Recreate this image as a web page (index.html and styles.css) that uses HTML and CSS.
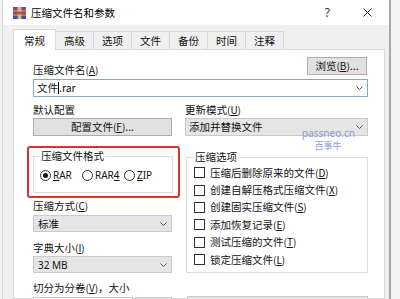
FILE: index.html
```html
<!DOCTYPE html>
<html lang="zh-CN">
<head>
<meta charset="utf-8">
<title>压缩文件名和参数</title>
<link rel="stylesheet" href="styles.css">
</head>
<body>
<div class="window">
  <div class="titlebar">
    <svg class="app-icon" viewBox="0 0 14 13" width="13" height="12">
      <rect x="0" y="0" width="14" height="4" fill="#9a3d78"/>
      <rect x="0" y="4.5" width="14" height="4" fill="#b8453a"/>
      <rect x="0" y="9" width="14" height="4" fill="#3e4fa3"/>
      <rect x="5" y="0" width="4" height="13" fill="#d9bb82"/>
      <rect x="4.5" y="5" width="5" height="3" fill="#8a6a3a"/>
    </svg>
    <span class="title">压缩文件名和参数</span>
    <span class="help">?</span>
    <svg class="close" viewBox="0 0 9 9" width="9" height="9">
      <path d="M0.5 0.5 L8.5 8.5 M8.5 0.5 L0.5 8.5" stroke="#222" stroke-width="1" fill="none"/>
    </svg>
  </div>
  <div class="tabs">
    <div class="tab active">常规</div>
    <div class="tab">高级</div>
    <div class="tab">选项</div>
    <div class="tab">文件</div>
    <div class="tab">备份</div>
    <div class="tab">时间</div>
    <div class="tab">注释</div>
  </div>
  <div class="panel">
    <div class="name-row">
      <span class="label">压缩文件名<span class="key">(<u>A</u>)</span></span>
      <div class="btn browse">浏览<span class="key">(<u>B</u>)</span>...</div>
    </div>
    <div class="combo edit">
      <span>文件<span class="caret"></span>.rar</span>
      <svg class="chev" viewBox="0 0 7 4" width="7" height="4"><polyline points="0.5,0.5 3.5,3.5 6.5,0.5" fill="none" stroke="#555" stroke-width="1"/></svg>
    </div>
    <div class="cols">
      <div class="col-left">
        <span class="label">默认配置</span>
        <div class="btn profile-btn">配置文件<span class="key">(<u>F</u>)</span>...</div>
        <div class="redbox">
          <fieldset class="group format-group">
            <legend>压缩文件格式</legend>
            <div class="radios">
              <div class="radio"><span class="radio-dot on"></span><span class="text"><u>R</u>AR</span></div>
              <div class="radio"><span class="radio-dot"></span><span class="text">RAR<u>4</u></span></div>
              <div class="radio"><span class="radio-dot"></span><span class="text"><u>Z</u>IP</span></div>
            </div>
          </fieldset>
        </div>
        <span class="label method-label">压缩方式<span class="key">(<u>C</u>)</span></span>
        <div class="combo method-combo">
          <span>标准</span>
          <svg class="chev" viewBox="0 0 7 4" width="7" height="4"><polyline points="0.5,0.5 3.5,3.5 6.5,0.5" fill="none" stroke="#555" stroke-width="1"/></svg>
        </div>
        <span class="label dict-label">字典大小<span class="key">(<u>I</u>)</span></span>
        <div class="combo dict-combo">
          <span class="latin">32 MB</span>
          <svg class="chev" viewBox="0 0 7 4" width="7" height="4"><polyline points="0.5,0.5 3.5,3.5 6.5,0.5" fill="none" stroke="#555" stroke-width="1"/></svg>
        </div>
        <span class="label split-label">切分为分卷<span class="key">(<u>V</u>)</span>，大小</span>
        <div class="split-row">
          <div class="split-size"></div>
          <div class="combo split-unit"></div>
        </div>
      </div>
      <div class="col-right">
        <span class="label">更新模式<span class="key">(<u>U</u>)</span></span>
        <div class="combo update-combo">
          <span>添加并替换文件</span>
          <svg class="chev" viewBox="0 0 7 4" width="7" height="4"><polyline points="0.5,0.5 3.5,3.5 6.5,0.5" fill="none" stroke="#555" stroke-width="1"/></svg>
        </div>
        <fieldset class="group options">
          <legend>压缩选项</legend>
          <div class="check-row"><span class="check"></span><span class="text">压缩后删除原来的文件<span class="key">(<u>D</u>)</span></span></div>
          <div class="check-row"><span class="check"></span><span class="text">创建自解压格式压缩文件<span class="key">(<u>X</u>)</span></span></div>
          <div class="check-row"><span class="check"></span><span class="text">创建固实压缩文件<span class="key">(<u>S</u>)</span></span></div>
          <div class="check-row"><span class="check"></span><span class="text">添加恢复记录<span class="key">(<u>E</u>)</span></span></div>
          <div class="check-row"><span class="check"></span><span class="text">测试压缩的文件<span class="key">(<u>T</u>)</span></span></div>
          <div class="check-row"><span class="check"></span><span class="text">锁定压缩文件<span class="key">(<u>L</u>)</span></span></div>
        </fieldset>
        <div class="combo bottom-combo"></div>
      </div>
    </div>
    <div class="watermark">
      <div class="wm-domain">passneo.cn</div>
      <div class="wm-name">百事牛</div>
    </div>
  </div>
</div>
</body>
</html>
```

FILE: styles.css
```css
* { box-sizing: border-box; }
html, body { margin: 0; padding: 0; }
body {
  width: 400px;
  height: 299px;
  overflow: hidden;
  background: #f4f4f4;
  font-family: "Noto Sans CJK SC", "Noto Sans", sans-serif;
  font-size: 10.5px;
  color: #111;
}
.window {
  margin-left: 2px;
  width: 389px;
  height: 299px;
  overflow: hidden;
  border-left: 1px solid #d4d4d4;
  border-right: 2px solid #a8a8a8;
  background: #f0f0f0;
  display: flex;
  flex-direction: column;
}
.titlebar {
  height: 25px;
  flex: none;
  background: #fff;
  display: flex;
  align-items: center;
}
.app-icon { margin-left: 10px; flex: none; }
.title { margin-left: 5px; line-height: 14px; color: #000; }
.help {
  margin-left: auto;
  font-family: "Noto Sans", sans-serif;
  font-size: 12px;
  line-height: 14px;
  color: #333;
}
.close { margin-left: 33px; margin-right: 17px; flex: none; }

.tabs {
  display: flex;
  align-items: flex-end;
  margin-left: 10px;
  padding-top: 4px;
  flex: none;
}
.tab {
  width: 38px;
  height: 18px;
  border: 1px solid #d9d9d9;
  border-left: none;
  border-bottom: none;
  padding-top: 2px;
  line-height: 14px;
  text-align: center;
  background: #f0f0f0;
}
.tab.active {
  width: 43px;
  height: 21px;
  margin-bottom: -1px;
  border-left: 1px solid #d9d9d9;
  padding-top: 4px;
  background: #fff;
  position: relative;
  z-index: 1;
}

.panel {
  margin-left: 10px;
  width: 372px;
  flex: 1;
  min-height: 0;
  background: #fff;
  border: 1px solid #d9d9d9;
  padding: 7px 16px 0 19px;
  position: relative;
}
.label { line-height: 14px; white-space: nowrap; }
.key { font-size: 10px; }
.latin { font-family: "Noto Sans", sans-serif; font-size: 10px; }

.name-row {
  display: flex;
  justify-content: space-between;
  height: 20px;
}
.name-row .label { align-self: flex-end; }

.btn {
  display: flex;
  align-items: center;
  justify-content: center;
  height: 18px;
  background: #e1e1e1;
  border: 1px solid #adadad;
  line-height: 14px;
  white-space: nowrap;
}
.browse { width: 60px; margin-right: 1px; }

.combo {
  height: 17px;
  display: flex;
  align-items: center;
  justify-content: space-between;
  padding: 0 4px 0 4px;
  background: #e5e5e5;
  border: 1px solid #cacaca;
  line-height: 14px;
  white-space: nowrap;
}
.chev { flex: none; }
.edit {
  height: 18px;
  margin-top: 2px;
  padding-left: 3px;
  background: #fff;
  border-color: #86aab9;
}
.caret {
  display: inline-block;
  width: 1px;
  height: 12px;
  background: #000;
  vertical-align: -2px;
}

.cols { display: flex; gap: 13px; margin-top: 6px; }
.col-left { width: 139px; display: flex; flex-direction: column; }
.col-right { width: 183px; display: flex; flex-direction: column; }

.profile-btn { margin-top: 1px; }

.redbox {
  margin-top: 10px;
  margin-left: -6px;
  width: 153px;
  border: 2px solid #d9342b;
  border-radius: 3px;
  padding: 0 5px 3px 4px;
}
.group {
  margin: 0;
  min-width: 0;
  border: 1px solid #dcdcdc;
  padding: 0 6px 10px;
}
.group legend { padding: 0 1px; line-height: 14px; }
.format-group { margin-top: 1px; }
.radios { display: flex; margin-top: 5px; height: 14px; }
.radio { display: flex; align-items: center; width: 45px; line-height: 14px; }
.radio-dot {
  width: 11px;
  height: 11px;
  flex: none;
  border: 1px solid #333;
  border-radius: 50%;
  background: #fff;
  display: flex;
  align-items: center;
  justify-content: center;
}
.radio-dot.on::after {
  content: "";
  width: 5px;
  height: 5px;
  border-radius: 50%;
  background: #1a1a1a;
}
.radio .text { margin-left: 2px; font-family: "Noto Sans", sans-serif; font-size: 10px; }

.method-label { margin-top: 1px; }
.method-combo { margin-top: 2px; }
.dict-label { margin-top: 9px; }
.dict-combo { margin-top: 1px; }
.split-label { margin-top: 8px; }
.split-row { display: flex; gap: 2px; margin-top: 2px; }
.split-size { width: 100px; height: 18px; background: #fff; border: 1px solid #c4c4c4; }
.split-unit { width: 37px; height: 18px; }

.update-combo { margin-top: 1px; height: 18px; padding-left: 3px; }
.options {
  margin-top: 14px;
  margin-left: 1px;
  width: 182px;
  padding: 0 7px 4px;
}
.check-row { display: flex; align-items: center; height: 17.4px; line-height: 14px; white-space: nowrap; }
.check {
  width: 11px;
  height: 11px;
  flex: none;
  border: 1px solid #333;
  background: #fff;
}
.check-row .text { margin-left: 5px; }
.bottom-combo { margin-top: 23px; margin-left: 2px; width: 181px; height: 18px; }

.watermark {
  position: absolute;
  left: 288px;
  top: 78px;
  width: 52px;
  text-align: center;
  color: #8494d2;
  opacity: 0.9;
}
.wm-domain { font-family: "Noto Sans", sans-serif; font-size: 10px; line-height: 10px; }
.wm-name { font-size: 9px; line-height: 9px; margin-top: 3px; }
```
